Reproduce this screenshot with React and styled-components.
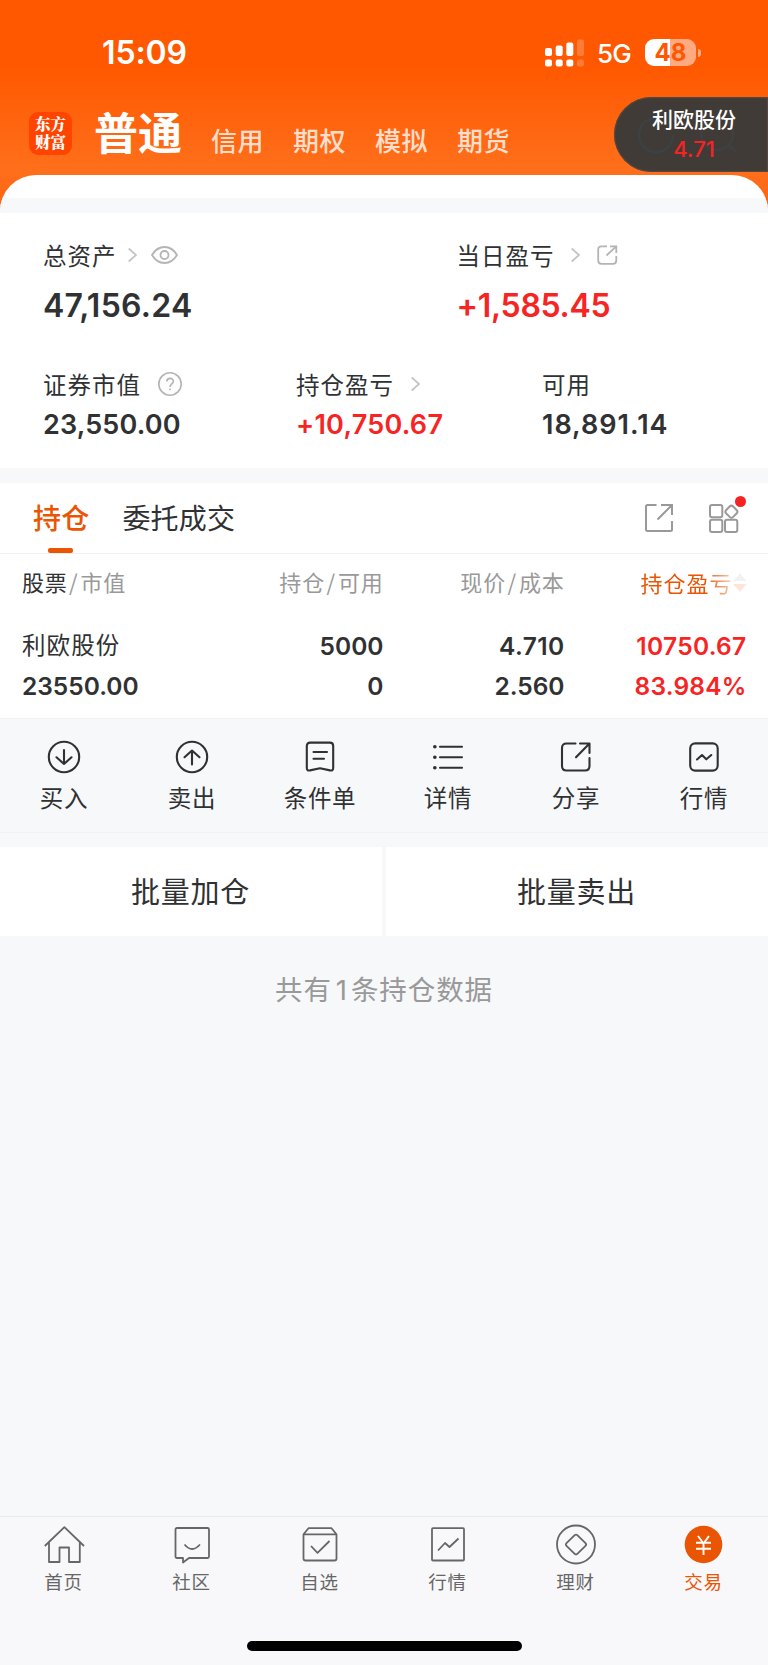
import React from 'react';
import styled, { createGlobalStyle } from 'styled-components';


const GlobalStyle = createGlobalStyle`
  * {
    box-sizing: border-box;
  }
  body {
    margin: 0;
    background: #f7f8fa;
    color: #303133;
    font-family: Inter, "Noto Sans CJK SC", sans-serif;
  }
  svg {
    display: block;
    flex: none;
    fill: none;
    stroke: currentColor;
    overflow: visible;
  }
`;

const Page = styled.div`
  display: flex;
  flex-direction: column;
  width: 768px;
  height: 1665px;
  overflow: hidden;
  white-space: nowrap;
`;

/* header */
const Header = styled.header`
  position: relative;
  flex: none;
  height: 213px;
  background: linear-gradient(#ff5800 0, #ff5800 66px, #ff6e1a 165px, #ff6e1a 175px, #ff6010 213px);
  color: #fff;
`;
const StatusBar = styled.div`
  display: flex;
  align-items: center;
  height: 92px;
  padding: 14px 67px 0 102px;
`;
const Clock = styled.div`
  margin-right: auto;
  padding-bottom: 1px;
  font-size: 32px;
  font-weight: 600;
  letter-spacing: -0.1px;
`;
const SignalBars = styled.svg`
  fill: #fff;
  stroke: none;
`;
const Network = styled.div`
  margin: 0 14px 0 13px;
  font-size: 26px;
  font-weight: 500;
  letter-spacing: -0.7px;
`;
const Battery = styled.div`
  width: 51px;
  height: 27px;
  margin-bottom: 2px;
  border-radius: 9px;
  background: linear-gradient(90deg, #fff 49%, #ffaa80 49%);
  color: #ff5800;
  font-size: 24px;
  font-weight: 700;
  line-height: 28px;
  text-align: center;
`;
const BatteryTip = styled.div`
  width: 3px;
  height: 8px;
  margin-left: 2px;
  border-radius: 0 4px 4px 0;
  background: #ffaa80;
`;
const Nav = styled.nav`
  display: flex;
  align-items: center;
  height: 83px;
  padding-left: 29px;
`;
const Logo = styled.div`
  width: 43px;
  height: 43px;
  padding-top: 4px;
  border-radius: 9px;
  background: #ff4400;
  font-family: Inter, "Noto Serif CJK SC", "Noto Sans CJK SC", sans-serif;
  font-size: 15.5px;
  font-weight: 900;
  line-height: 18px;
  text-align: center;
`;
const LogoLine = styled.div`
  height: 18px;
`;
const NavCurrent = styled.div`
  width: 117px;
  margin-left: 22px;
  font-size: 44px;
  font-weight: 700;
  line-height: 50px;
`;
const NavItem = styled.div`
  width: 82px;
  padding-top: 11px;
  color: rgba(255, 255, 255, 0.8);
  font-size: 26px;
  font-weight: 500;
  letter-spacing: 0.5px;
`;
const Sheet = styled.div`
  height: 38px;
  padding-top: 23px;
  border-radius: 36px 36px 0 0;
  background: #fff;
  overflow: hidden;
`;
const SheetGap = styled.div`
  height: 15px;
  background: #f7f8fa;
`;
/* floating quote that hangs over the header */
const Quote = styled.div`
  position: absolute;
  top: 97px;
  right: 0;
  width: 154px;
  height: 75px;
  padding: 9px 0 0 6px;
  border-radius: 38px 0 0 38px;
  background: #413b37;
  box-shadow: inset 0 0 1px 1px #5a4a42;
  text-align: center;
`;
const QuoteName = styled.div`
  position: relative;
  font-size: 21px;
  font-weight: 500;
  line-height: 28px;
`;
const QuotePrice = styled.div`
  position: relative;
  color: #f52323;
  font-size: 22px;
  font-weight: 500;
  line-height: 30px;
`;
const QuoteShade = styled.svg`
  position: absolute;
  top: 17px;
  left: 22px;
  color: #3c4144;
`;

/* account summary */
const Summary = styled.section`
  flex: none;
  height: 255px;
  padding: 24px 0 0 43px;
  background: #fff;
`;
const SummaryRow = styled.div`
  display: grid;
  grid-template-columns: ${({ $cols }) => $cols};
  height: ${({ $height }) => $height}px;
`;
const Label = styled.div`
  display: flex;
  align-items: center;
  height: 36px;
  font-size: 23.5px;
  letter-spacing: 1px;
`;
const LabelIcon = styled.svg`
  margin-left: ${({ $gap }) => $gap}px;
  color: ${({ $color }) => $color || '#b4b4b4'};
`;
const Amount = styled.div`
  height: ${({ $large }) => ($large ? 66 : 46)}px;
  color: ${({ $up }) => ($up ? '#f72424' : 'inherit')};
  font-size: ${({ $large }) => ($large ? 32 : 27)}px;
  font-weight: 600;
  line-height: ${({ $large }) => ($large ? 66 : 46)}px;
  letter-spacing: ${({ $track }) => $track || 0}px;
`;

/* holdings */
const Holdings = styled.section`
  flex: none;
  height: 236px;
  margin-top: 15px;
  border-bottom: 1px solid #f0f1f3;
  background: #fff;
`;
const Tabs = styled.div`
  display: flex;
  height: 71px;
  padding: 0 30px 0 33px;
  border-bottom: 1px solid #f0f0f2;
`;
const Tab = styled.div`
  display: flex;
  flex-direction: column;
  align-items: center;
  margin-right: 33px;
  color: ${({ $active }) => ($active ? '#ea5504' : 'inherit')};
  font-size: 28px;
  font-weight: ${({ $active }) => ($active ? 500 : 400)};
  line-height: 73px;
  letter-spacing: 0.2px;
`;
const TabLine = styled.div`
  width: 25px;
  height: 5px;
  margin: -8px 2px 0 0;
  border-radius: 2px;
  background: #ea5504;
`;
const TabTools = styled.div`
  display: flex;
  align-items: center;
  gap: 36px;
  margin-left: auto;
  color: #999;
`;
const ToolBox = styled.div`
  position: relative;
`;
const Dot = styled.div`
  position: absolute;
  top: -8px;
  right: -8px;
  width: 11px;
  height: 11px;
  border-radius: 50%;
  background: #f52323;
`;
const TableRow = styled.div`
  display: grid;
  grid-template-columns: 200px 161.5px 181px 182px;
  padding: 0 22px;
  text-align: right;
`;
const HeadCell = styled.div`
  color: #999;
  font-size: 22px;
  line-height: 55px;
  letter-spacing: 0.8px;
  text-align: ${({ $left }) => ($left ? 'left' : 'right')};
`;
const Strong = styled.span`
  color: #303133;
`;
const Slash = styled.span`
  margin: 0 2px 0 1.5px;
  font-family: "Noto Sans CJK SC", sans-serif;
`;
const SortCell = styled.div`
  display: flex;
  align-items: center;
  justify-content: flex-end;
  height: 55px;
  color: #ea5504;
  font-size: 22px;
  letter-spacing: 1px;
  -webkit-mask-image: linear-gradient(90deg, #000 140px, rgba(0, 0, 0, 0.15) 172px);
  mask-image: linear-gradient(90deg, #000 140px, rgba(0, 0, 0, 0.15) 172px);
`;
const Cell = styled.div`
  color: ${({ $up }) => ($up ? '#f72424' : 'inherit')};
  font-size: 24.5px;
  font-weight: 600;
  line-height: 40px;
  letter-spacing: ${({ $track }) => $track || 0}px;
  text-align: ${({ $left }) => ($left ? 'left' : 'right')};
`;
const StockName = styled(Cell)`
  font-size: 23.5px;
  font-weight: 400;
  letter-spacing: 1.1px;
`;
const TableBody = styled.div`
  padding-top: 15px;
`;
const SortIcon = styled.svg`
  stroke: none;
`;

/* row actions */
const Actions = styled.div`
  flex: none;
  display: grid;
  grid-template-columns: repeat(6, 128px);
  height: 114px;
  padding-top: 21px;
  border-bottom: 1px solid #f1f2f4;
`;
const Action = styled.div`
  display: flex;
  flex-direction: column;
  align-items: center;
  font-size: 23.5px;
  line-height: 45px;
  letter-spacing: 0.7px;
`;
const BatchBar = styled.div`
  flex: none;
  display: grid;
  grid-template-columns: 1fr 1fr;
  gap: 4px;
  margin-top: 14px;
`;
const BatchButton = styled.div`
  height: 89px;
  padding-right: 1px;
  background: #fff;
  font-size: 29px;
  line-height: 92px;
  letter-spacing: 0.8px;
  text-align: center;
`;
const Total = styled.div`
  flex: 1;
  padding-top: 34px;
  color: #999;
  font-size: 27.5px;
  line-height: 40px;
  letter-spacing: 0.9px;
  text-align: center;
`;
const Count = styled.span`
  margin: 0 3px 0 4px;
`;

/* bottom bar */
const TabBar = styled.footer`
  flex: none;
  display: flex;
  flex-direction: column;
  height: 149px;
  border-top: 1px solid #e6ebec;
  background: #f8f8fa;
`;
const TabBarItems = styled.div`
  display: grid;
  grid-template-columns: repeat(6, 128px);
  padding-top: 9px;
`;
const TabBarItem = styled.div`
  display: flex;
  flex-direction: column;
  align-items: center;
  color: ${({ $active }) => ($active ? '#ea5504' : '#666')};
  font-size: 18.5px;
  line-height: 32px;
  letter-spacing: 0.7px;
`;
const TabBarName = styled.div`
  padding-right: 1px;
`;
const HomeIndicator = styled.div`
  width: 275px;
  height: 10px;
  margin: auto auto 14px;
  border-radius: 5px;
  background: #000;
`;


const Signal = () => (
  <SignalBars width="39" height="28">
    <rect x="0" y="9" width="7" height="8" rx="2" />
    <rect x="10.7" y="6.5" width="7" height="10.5" rx="2" />
    <rect x="21.3" y="3.5" width="7" height="13.5" rx="2" />
    <rect x="32" y="0.5" width="7" height="16.5" rx="2" opacity="0.22" />
    <rect x="0" y="20.5" width="7" height="7" rx="2" />
    <rect x="10.7" y="20.5" width="7" height="7" rx="2" />
    <rect x="21.3" y="20.5" width="7" height="7" rx="2" />
    <rect x="32" y="20.5" width="7" height="7" rx="2" opacity="0.22" />
  </SignalBars>
);

const Chevron = ({ gap }) => (
  <LabelIcon $gap={gap} $color="#c4c4c4" width="9" height="14" strokeWidth="1.7">
    <path d="M0.7 0.5L8 7L0.7 13.5" />
  </LabelIcon>
);

const Eye = () => (
  <LabelIcon $gap={14} width="27" height="18" strokeWidth="1.8">
    <path d="M1 9C4 4 8.5 1 13.5 1S23 4 26 9C23 14 18.5 17 13.5 17S4 14 1 9Z" />
    <circle cx="13.5" cy="9" r="4" />
  </LabelIcon>
);

const SmallShare = () => (
  <LabelIcon $gap={17} width="21" height="20" strokeWidth="1.8">
    <path d="M10 1.3H4.5Q1.2 1.3 1.2 4.5V15.5Q1.2 18.8 4.5 18.8H16Q19.3 18.8 19.3 15.5V11" />
    <path d="M13 1.3H19.3V8M19 1.6L9.5 10.5" />
  </LabelIcon>
);

const Help = () => (
  <LabelIcon $gap={17} width="24" height="24" strokeWidth="1.6">
    <circle cx="12" cy="12" r="11.2" />
    <path d="M8.8 9.6C8.8 5.3 15.4 5.3 15.4 9.4C15.4 11.8 12 11.9 12 15" />
    <path d="M12 16.6V18.2" />
  </LabelIcon>
);

const Sort = () => (
  <SortIcon width="14" height="20">
    <path d="M7 1L13.5 9H0.5Z" fill="#aaa" />
    <path d="M7 20L13.5 12H0.5Z" fill="#ea5504" />
  </SortIcon>
);

const actions = [
  {
    name: '买入',
    icon: <><circle cx="17" cy="17" r="15.2" /><path d="M17 10V24M9.5 17.3L17 24L24.5 17.3" /></>,
  },
  {
    name: '卖出',
    icon: <><circle cx="17" cy="17" r="15.2" /><path d="M17 24.5V10.5M9.5 17.2L17 10.5L24.5 17.2" /></>,
  },
  {
    name: '条件单',
    icon: <><path d="M3.8 6Q3.8 2.6 7.2 2.6H26.8Q30.2 2.6 30.2 6V28Q30.2 31.2 27 30.4L17 28.2L7 30.4Q3.8 31.2 3.8 28Z" /><path d="M10.5 12H24M10.5 18.8H21" /></>,
  },
  {
    name: '详情',
    icon: <><path d="M9 6.8H31M9 17.3H31M9 27.8H31" /><path d="M3.8 6.8H3.9M3.8 17.3H3.9M3.8 27.8H3.9" strokeWidth="3.6" /></>,
  },
  {
    name: '分享',
    icon: <><path d="M16.5 3.5H7.5Q3 3.5 3 8V26Q3 30.5 7.5 30.5H26Q30.5 30.5 30.5 26V18" /><path d="M21 3.5H30.5V13M30 4L17 17.3" /></>,
  },
  {
    name: '行情',
    icon: <><rect x="3.2" y="3.4" width="27.5" height="27.2" rx="5" /><path d="M10 19.5L15 15L19.3 19.3L24.3 15" /></>,
  },
];

const tabBar = [
  {
    name: '首页',
    icon: <path d="M0.8 20L20.4 1.2L40 20M5 16.5V36H15.5V21.5H25V36H35.8V16.5" />,
  },
  {
    name: '社区',
    icon: <><path d="M5 2H35.5Q37 2 37 3.5V30.5Q37 32 35.5 32H17L11 36.5V32H5Q3.5 32 3.5 30.5V3.5Q3.5 2 5 2Z" /><path d="M12.5 18.5Q20 27.5 28 18.5" /></>,
  },
  {
    name: '自选',
    icon: <><path d="M3.5 8.3H36.5V32.5Q36.5 34.5 34.5 34.5H5.5Q3.5 34.5 3.5 32.5ZM3.5 8.3L8.5 2.2H31.5L36.5 8.3" /><path d="M11 20L17.5 26.8L29.5 15" /></>,
  },
  {
    name: '行情',
    icon: <><rect x="4" y="2.2" width="32" height="32.3" rx="1" /><path d="M10 24.5L17 17L21.5 21L30.5 12.5" /></>,
  },
  {
    name: '理财',
    icon: <><circle cx="20" cy="18.5" r="19" /><path d="M18.7 9.2Q20 7.9 21.3 9.2L29.5 17.2Q30.8 18.5 29.5 19.8L21.3 27.8Q20 29.1 18.7 27.8L10.5 19.8Q9.2 18.5 10.5 17.2Z" /></>,
  },
  {
    name: '交易',
    active: true,
    icon: <><circle cx="19.5" cy="18.5" r="18.8" fill="#ea5504" stroke="none" /><path d="M14 10L19.5 17.5L25 10M19.5 17.5V29M12 16.8H27M12 22.8H27" stroke="#fff" strokeWidth="1.9" /></>,
  },
];


function App() {
  return (
    <Page>
      <GlobalStyle />
      <Header>
        <StatusBar>
          <Clock>15:09</Clock>
          <Signal />
          <Network>5G</Network>
          <Battery>48</Battery>
          <BatteryTip />
        </StatusBar>
        <Nav>
          <Logo>
            <LogoLine>东方</LogoLine>
            <LogoLine>财富</LogoLine>
          </Logo>
          <NavCurrent>普通</NavCurrent>
          {['信用', '期权', '模拟', '期货'].map((name) => (
            <NavItem key={name}>{name}</NavItem>
          ))}
        </Nav>
        <Sheet>
          <SheetGap />
        </Sheet>
        <Quote>
          <QuoteShade width="104" height="44" strokeWidth="2.5">
            <path d="M37 21A17 17 0 1 1 20 4" />
            <circle cx="81" cy="20" r="16" />
            <path d="M92 31L100 38" />
          </QuoteShade>
          <QuoteName>利欧股份</QuoteName>
          <QuotePrice>4.71</QuotePrice>
        </Quote>
      </Header>

      <Summary>
        <SummaryRow $cols="413.5px 1fr" $height={129}>
          <div>
            <Label>总资产<Chevron gap={11} /><Eye /></Label>
            <Amount $large $track={0.25}>47,156.24</Amount>
          </div>
          <div>
            <Label>当日盈亏<Chevron gap={16} /><SmallShare /></Label>
            <Amount $large $up $track={-0.3}>+1,585.45</Amount>
          </div>
        </SummaryRow>
        <SummaryRow $cols="253px 246px 1fr" $height={90}>
          <div>
            <Label>证券市值<Help /></Label>
            <Amount $track={0.15}>23,550.00</Amount>
          </div>
          <div>
            <Label>持仓盈亏<Chevron gap={17} /></Label>
            <Amount $up $track={0.25}>+10,750.67</Amount>
          </div>
          <div>
            <Label>可用</Label>
            <Amount $track={1}>18,891.14</Amount>
          </div>
        </SummaryRow>
      </Summary>

      <Holdings>
        <Tabs>
          <Tab $active>持仓<TabLine /></Tab>
          <Tab>委托成交</Tab>
          <TabTools>
            <svg width="28" height="28" strokeWidth="2">
              <path d="M11.5 1H2.5Q1 1 1 2.5V25.5Q1 27 2.5 27H25.5Q27 27 27 25.5V17" />
              <path d="M16 1H27V11M26.5 1.5L12.5 15.5" />
            </svg>
            <ToolBox>
              <svg width="29" height="29" strokeWidth="2">
                <rect x="1" y="1" width="12.3" height="12.3" rx="2" />
                <rect x="1" y="15.7" width="12.3" height="12.3" rx="2" />
                <rect x="16" y="15.7" width="12.3" height="12.3" rx="2" />
                <rect x="17.5" y="2.8" width="9.8" height="9.8" rx="2.5" transform="rotate(45 22.4 7.7)" />
              </svg>
              <Dot />
            </ToolBox>
          </TabTools>
        </Tabs>
        <TableRow>
          <HeadCell $left><Strong>股票</Strong><Slash>/</Slash>市值</HeadCell>
          <HeadCell>持仓<Slash>/</Slash>可用</HeadCell>
          <HeadCell>现价<Slash>/</Slash>成本</HeadCell>
          <SortCell>持仓盈亏<Sort /></SortCell>
        </TableRow>
        <TableBody>
          <TableRow>
            <StockName $left>利欧股份</StockName>
            <Cell>5000</Cell>
            <Cell $track={0.4}>4.710</Cell>
            <Cell $up $track={0.3}>10750.67</Cell>
          </TableRow>
          <TableRow>
            <Cell $left>23550.00</Cell>
            <Cell>0</Cell>
            <Cell>2.560</Cell>
            <Cell $up $track={0.2}>83.984%</Cell>
          </TableRow>
        </TableBody>
      </Holdings>

      <Actions>
        {actions.map(({ name, icon }) => (
          <Action key={name}>
            <svg width="34" height="36" strokeWidth="2.1" strokeLinecap="round" strokeLinejoin="round">{icon}</svg>
            {name}
          </Action>
        ))}
      </Actions>
      <BatchBar>
        <BatchButton>批量加仓</BatchButton>
        <BatchButton>批量卖出</BatchButton>
      </BatchBar>
      <Total>共有<Count>1</Count>条持仓数据</Total>

      <TabBar>
        <TabBarItems>
          {tabBar.map(({ name, icon, active }) => (
            <TabBarItem key={name} $active={active}>
              <svg width="40" height="40" strokeWidth="1.8" strokeLinejoin="round">{icon}</svg>
              <TabBarName>{name}</TabBarName>
            </TabBarItem>
          ))}
        </TabBarItems>
        <HomeIndicator />
      </TabBar>
    </Page>
  );
}

export default App;
